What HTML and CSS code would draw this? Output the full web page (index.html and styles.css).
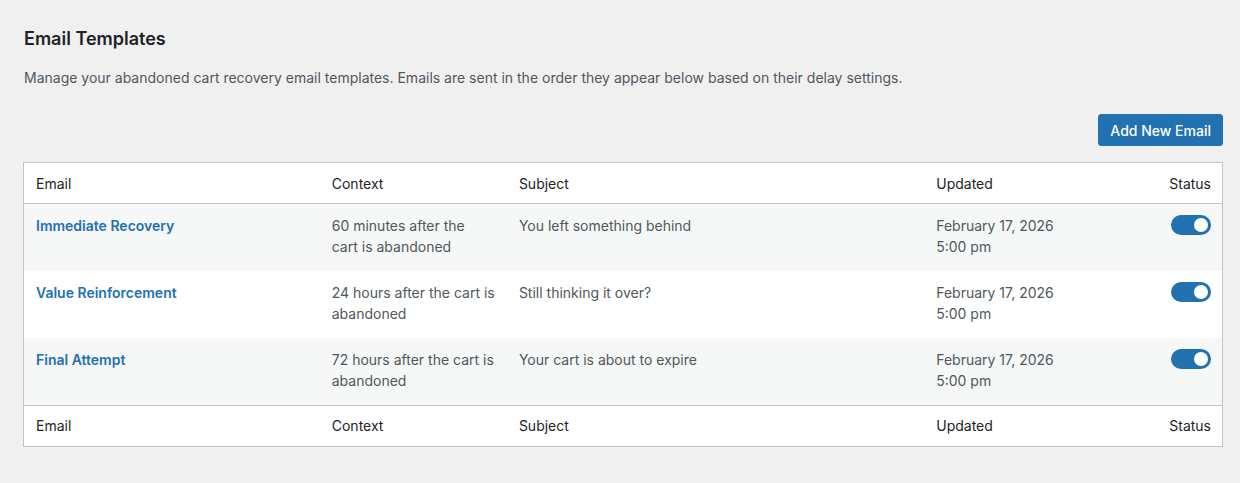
FILE: index.html
```html
<!DOCTYPE html>
<html lang="en">
<head>
<meta charset="utf-8">
<title>Email Templates</title>
<link rel="stylesheet" href="styles.css">
</head>
<body>
<div class="wrap">
  <h2 class="title">Email Templates</h2>
  <p class="desc">Manage your abandoned cart recovery email templates. Emails are sent in the order they appear below based on their delay settings.</p>
  <div class="toolbar">
    <button class="btn-primary" type="button">Add New Email</button>
  </div>
  <table class="list">
    <colgroup>
      <col class="c-email">
      <col class="c-context">
      <col class="c-subject">
      <col class="c-updated">
      <col class="c-status">
    </colgroup>
    <thead>
      <tr><th>Email</th><th>Context</th><th>Subject</th><th>Updated</th><th class="right">Status</th></tr>
    </thead>
    <tbody>
      <tr class="alt">
        <td><a class="name" href="#">Immediate Recovery</a></td>
        <td>60 minutes after the<br>cart is abandoned</td>
        <td>You left something behind</td>
        <td>February 17, 2026<br>5:00 pm</td>
        <td class="right"><span class="toggle on"><span class="knob"></span></span></td>
      </tr>
      <tr>
        <td><a class="name" href="#">Value Reinforcement</a></td>
        <td>24 hours after the cart is abandoned</td>
        <td>Still thinking it over?</td>
        <td>February 17, 2026<br>5:00 pm</td>
        <td class="right"><span class="toggle on"><span class="knob"></span></span></td>
      </tr>
      <tr class="alt">
        <td><a class="name" href="#">Final Attempt</a></td>
        <td>72 hours after the cart is abandoned</td>
        <td>Your cart is about to expire</td>
        <td>February 17, 2026<br>5:00 pm</td>
        <td class="right"><span class="toggle on"><span class="knob"></span></span></td>
      </tr>
    </tbody>
    <tfoot>
      <tr><th>Email</th><th>Context</th><th>Subject</th><th>Updated</th><th class="right">Status</th></tr>
    </tfoot>
  </table>
</div>
</body>
</html>
```
FILE: styles.css
```css
html, body {
  margin: 0;
  padding: 0;
  background: #f0f0f1;
}
body {
  font-family: Inter, "Noto Sans", "Liberation Sans", sans-serif;
  font-size: 14px;
  line-height: 21px;
  color: #3c434a;
}
.wrap {
  padding: 26px 17px 20px 23px;
}
.title {
  margin: 0 0 0 1px;
  font-size: 18px;
  line-height: 26px;
  font-weight: 600;
  color: #1d2327;
}
.desc {
  margin: 15px 0 0 1px;
  color: #50575e;
}
.toolbar {
  display: flex;
  justify-content: flex-end;
  margin-top: 26px;
  margin-bottom: 16px;
}
.btn-primary {
  height: 32px;
  padding: 0 11px;
  border: 1px solid #2271b1;
  border-radius: 3px;
  background: #2271b1;
  color: #fff;
  font-family: inherit;
  font-size: 14px;
  font-weight: 500;
  cursor: pointer;
}
.list {
  width: 1200px;
  table-layout: fixed;
  border-collapse: collapse;
  border: 1px solid #c3c4c7;
  background: #fff;
}
.c-email { width: 296px; }
.c-context { width: 187px; }
.c-subject { width: 417px; }
.c-updated { width: 196px; }
.c-status { width: 102px; }
.list th {
  text-align: left;
  font-weight: 400;
  color: #1d2327;
  padding: 10px 12px 9px 12px;
  line-height: 21px;
}
.list tfoot th {
  padding-top: 9px;
  padding-bottom: 10px;
}
.list thead tr { border-bottom: 1px solid #c3c4c7; }
.list tfoot tr { border-top: 1px solid #c3c4c7; }
.list td {
  vertical-align: top;
  padding: 11px 12px 14px 12px;
  color: #50575e;
}
.list tbody tr.alt { background: #f6f7f7; }
.list .right {
  text-align: right;
  padding-right: 11px;
}
.name {
  color: #2271b1;
  font-weight: 600;
  text-decoration: none;
}
.toggle {
  display: inline-block;
  position: relative;
  width: 40px;
  height: 20px;
  border-radius: 10px;
  background: #2271b1;
  vertical-align: top;
}
.toggle .knob {
  position: absolute;
  top: 3px;
  right: 3px;
  width: 14px;
  height: 14px;
  border-radius: 50%;
  background: #fff;
}
```
